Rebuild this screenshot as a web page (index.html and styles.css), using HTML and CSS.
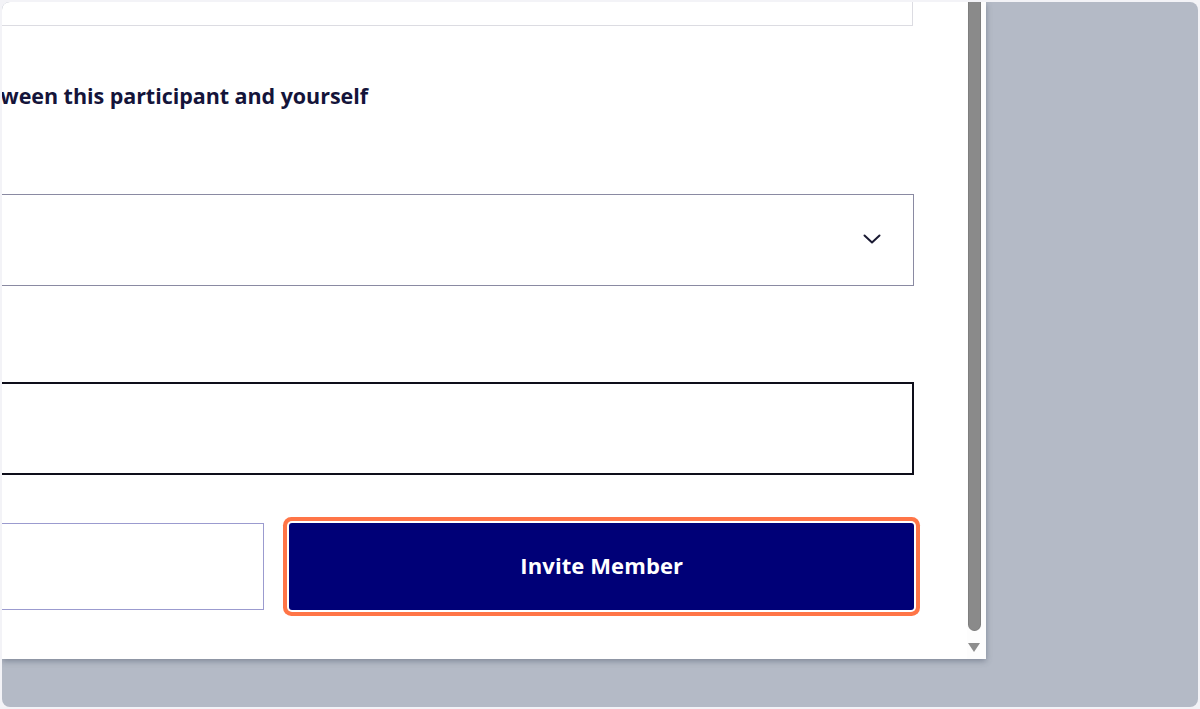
FILE: index.html
```html
<!DOCTYPE html>
<html>
<head>
<meta charset="utf-8">
<link rel="stylesheet" href="styles.css">
</head>
<body>
<div class="frame">
  <div class="modal">
    <div class="content">
      <form class="form">
        <div class="top-field"></div>
        <label class="label">Please indicate the relationship between this participant and yourself</label>
        <div class="select">
          <svg class="chev" width="18" height="10" viewBox="0 0 18 10"><path d="M1.5 1.5 L9 8.5 L16.5 1.5" fill="none" stroke="#1a1a33" stroke-width="2" stroke-linecap="round" stroke-linejoin="round"/></svg>
        </div>
        <label class="label2">Other relationship</label>
        <div class="input"></div>
        <div class="actions">
          <button type="button" class="btn-cancel">Cancel</button>
          <button type="button" class="btn-invite">Invite Member</button>
        </div>
      </form>
    </div>
    <div class="scrollbar">
      <div class="thumb"></div>
      <div class="arrow"></div>
    </div>
  </div>
</div>
</body>
</html>
```
FILE: styles.css
```css
* { box-sizing: border-box; }
html, body { margin: 0; padding: 0; }
body {
  background: #f3f3f7;
  font-family: "Open Sans", "Liberation Sans", sans-serif;
  width: 1200px;
  height: 709px;
  overflow: hidden;
}
.frame {
  margin: 2px;
  height: 705px;
  border-radius: 8px;
  background: #b4bac6;
  overflow: hidden;
}
.modal {
  width: 984px;
  height: 657px;
  background: #ffffff;
  display: flex;
  box-shadow: 0 2px 6px rgba(60, 70, 90, 0.45);
}
.content {
  flex: 1;
  overflow: hidden;
}
.form {
  width: 1312px;
  margin-left: -400px;
  display: flex;
  flex-direction: column;
}
.top-field {
  height: 60px;
  margin-top: -36px;
  border: 1px solid #dcdce2;
  width: 1311px;
}
.label {
  margin-top: 57px;
  height: 26px;
  font-size: 21.5px;
  line-height: 26px;
  font-weight: 700;
  color: #14143a;
  white-space: nowrap;
  text-align: right;
  width: 766px;
  letter-spacing: -0.05px;
}
.select {
  margin-top: 85px;
  height: 92px;
  border: 1px solid #8a8aa2;
  display: flex;
  align-items: center;
  justify-content: flex-end;
  padding-right: 32px;
}
.chev { display: block; margin-top: -2px; }
.label2 {
  height: 96px;
  visibility: hidden;
}
.input {
  height: 93px;
  border: 2px solid #0e0e1a;
}
.actions {
  margin-top: 48px;
  display: flex;
  gap: 25px;
}
.btn-cancel {
  width: 663px;
  height: 87px;
  border: 1px solid #9b9bcf;
  background: #fff;
  color: transparent;
  font-size: 20px;
}
.btn-invite {
  width: 625px;
  height: 87px;
  border: none;
  background: #000077;
  color: #ffffff;
  font-family: "Open Sans", "Liberation Sans", sans-serif;
  font-weight: 700;
  font-size: 22px;
  letter-spacing: 0.1px;
  padding: 0 0 4px 0;
  box-shadow: 0 0 0 2px #ffffff, 0 0 0 6px #ff7547;
  border-radius: 3px;
}
.scrollbar {
  width: 19px;
  flex: none;
  background: #fdfdfd;
  display: flex;
  flex-direction: column;
  align-items: flex-start;
  padding-left: 1px;
}
.thumb {
  width: 13px;
  height: 629px;
  background: #8a8a8a;
  border: 1px solid #7e7e7e;
  border-top: none;
  border-radius: 0 0 7px 7px;
}
.arrow {
  margin-top: 12px;
  width: 0;
  height: 0;
  border-left: 6.5px solid transparent;
  border-right: 6.5px solid transparent;
  border-top: 9px solid #8e8e8e;
}
```
